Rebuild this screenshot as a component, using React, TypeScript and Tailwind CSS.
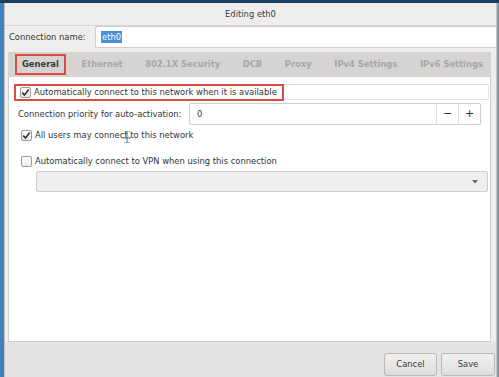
import React from 'react';

const Check = ({ checked }: { checked: boolean }) => (
    <span className="w-[11px] h-[11px] shrink-0 rounded-[2px] border border-[#9b9b9b] bg-gradient-to-b from-white to-[#e9e9e9] flex items-center justify-center">
        {checked && (
            <svg width="9" height="9" viewBox="0 0 9 9">
                <path d="M1.2 4.6 L3.5 7 L7.8 1.6" fill="none" stroke="#2e3436" strokeWidth="1.6" />
            </svg>
        )}
    </span>
);

const tabs = ['Ethernet', '802.1X Security', 'DCB', 'Proxy', 'IPv4 Settings', 'IPv6 Settings'];

export default function App() {
    return (
        <div className="w-[499px] h-[377px] overflow-hidden bg-[#1a3756] flex flex-col font-['DejaVu_Sans',sans-serif] text-[8.4px] text-[#2e3436]">
            <div className="h-[3px] bg-[#1d3d60]" />
            <div className="flex-1 flex">
                <div className="w-[4px] bg-[#3d82ba]" />
                <div className="flex-1 flex flex-col bg-[#efeeed] border-l border-r border-[#c4c3c2]">
                    {/* title */}
                    <div className="h-[23px] shrink-0 flex items-center justify-center text-[#3a3a3a] border-b border-[#d6d5d4]">
                        Editing eth0
                    </div>

                    {/* connection name */}
                    <div className="flex items-center h-[22px] shrink-0 pl-[4px]">
                        <span className="w-[86px]">Connection name:</span>
                        <div className="flex-1 h-full bg-white border border-[#cfcecd] border-r-0 rounded-l-[2px] flex items-center pl-[5px]">
                            <span className="bg-[#4a90d9] text-white px-[1px]">eth0</span>
                        </div>
                    </div>

                    {/* tabs */}
                    <div className="mt-[4px] ml-[3px] mr-[5px] h-[25px] shrink-0 bg-[#d5d4d3] flex items-center pl-[14px] gap-[22.6px] font-bold text-[#a6a6a6]">
                        <span className="-mx-[7px] px-[5px] py-[2px] border-2 border-[#df4a44] text-[#3a3a3a]">General</span>
                        {tabs.map((t) => (
                            <span key={t}>{t}</span>
                        ))}
                    </div>

                    {/* panel */}
                    <div className="relative ml-[3px] mr-[5px] h-[265px] shrink-0 bg-white border border-[#cfcdcb] border-t-0 pt-[7px]">
                        <div className="relative ml-[5px] mr-[1px] h-[16px] border border-[#e2e2e2] flex items-center gap-[3px] pl-[5px]">
                            <Check checked />
                            <span>Automatically connect to this network when it is available</span>
                            <div className="absolute -left-[1px] -top-[1px] w-[270px] h-[17px] border-2 border-[#df4a44]" />
                        </div>

                        <div className="flex items-center h-[22px] mt-[3px] pl-[9px] pr-[9px]">
                            <span className="w-[171px]">Connection priority for auto-activation:</span>
                            <div className="flex-1 h-full flex border border-[#cfcecd] rounded-[2px] bg-white">
                                <span className="flex-1 flex items-center pl-[7px]">0</span>
                                <span className="w-[22px] border-l border-[#e0dfde] flex items-center justify-center text-[11px]">−</span>
                                <span className="w-[22px] border-l border-[#e0dfde] flex items-center justify-center text-[11px]">+</span>
                            </div>
                        </div>

                        <div className="flex items-center gap-[3px] pl-[12px] mt-[4px] h-[12px]">
                            <Check checked />
                            <span>All users may connect to this network</span>
                        </div>

                        <div className="flex items-center gap-[3px] pl-[12px] mt-[14px] h-[12px]">
                            <Check checked={false} />
                            <span>Automatically connect to VPN when using this connection</span>
                        </div>

                        <div className="ml-[27px] mr-[2px] mt-[4px] h-[21px] bg-[#efefef] border border-[#d0cfce] rounded-[2px] flex items-center justify-end pr-[9px]">
                            <svg width="6" height="4" viewBox="0 0 6 4">
                                <path d="M0 0 L6 0 L3 3.5 Z" fill="#6a6a6a" />
                            </svg>
                        </div>

                        {/* mouse cursor */}
                        <svg className="absolute left-[113px] top-[54px]" width="10" height="12" viewBox="0 0 10 12">
                            <path d="M5 0 V12 M2 0 H8 M2 12 H8 M1 7 H9" fill="none" stroke="#3b7f9c" strokeWidth="1" />
                        </svg>
                    </div>

                    {/* buttons */}
                    <div className="flex-1 bg-[#e6e4e3] flex items-start justify-end gap-[4px] pt-[11px] pr-[1px]">
                        <button className="w-[53px] h-[23px] rounded-[3px] border border-[#b9b8b7] bg-gradient-to-b from-[#f2f1f0] to-[#dedddc] text-[#3a3a3a]">
                            Cancel
                        </button>
                        <button className="w-[54px] h-[23px] rounded-[3px] border border-[#b9b8b7] bg-gradient-to-b from-[#f2f1f0] to-[#dedddc] text-[#3a3a3a]">
                            Save
                        </button>
                    </div>
                </div>
                <div className="w-[2px] bg-[#8e9aa6]" />
            </div>
        </div>
    );
}
